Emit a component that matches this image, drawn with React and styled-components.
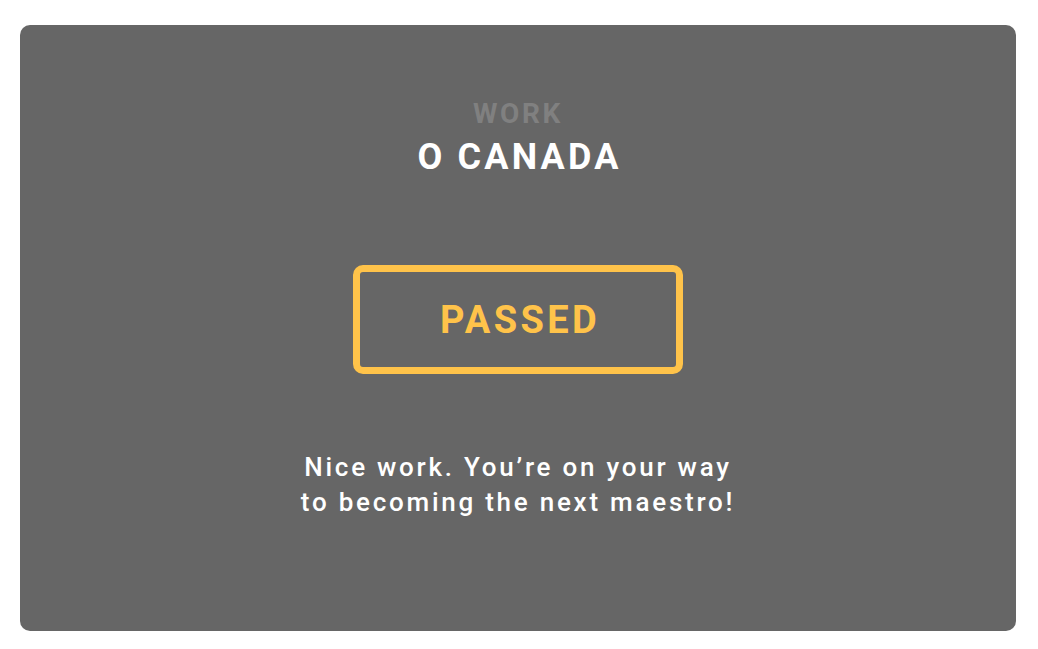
import React from "react";
import styled, { createGlobalStyle } from "styled-components";

const Global = createGlobalStyle`
  html, body { margin: 0; padding: 0; background: #ffffff; }
  body { font-family: Roboto, "Liberation Sans", sans-serif; }
`;

const Page = styled.div`
  padding: 25px 22px 18px 20px;
`;

const Card = styled.div`
  background: #666666;
  border-radius: 10px;
  height: 606px;
  display: flex;
  flex-direction: column;
  align-items: center;
  box-sizing: border-box;
  padding-top: 72px;
`;

const Label = styled.div`
  color: #808080;
  font-weight: 700;
  font-size: 28px;
  letter-spacing: 2.6px;
  line-height: 34px;
`;

const Title = styled.div`
  color: #ffffff;
  font-weight: 700;
  font-size: 36px;
  letter-spacing: 3.2px;
  line-height: 44px;
  margin-top: 4px;
  padding-left: 3px;
`;

const Badge = styled.div`
  margin-top: 86px;
  width: 330px;
  height: 109px;
  box-sizing: border-box;
  border: 7px solid #ffc34a;
  border-radius: 10px;
  display: flex;
  align-items: center;
  justify-content: center;
  padding-left: 4px;
  color: #ffc34a;
  font-weight: 700;
  font-size: 38px;
  letter-spacing: 3.4px;
`;

const Message = styled.p`
  margin: 76px 0 0;
  color: #ffffff;
  font-weight: 500;
  font-size: 26px;
  line-height: 35px;
  letter-spacing: 2.75px;
  text-align: center;
`;

export default function App() {
  return (
    <>
      <Global />
      <Page>
        <Card>
          <Label>WORK</Label>
          <Title>O CANADA</Title>
          <Badge>PASSED</Badge>
          <Message>
            Nice work. You’re on your way
            <br />
            to becoming the next maestro!
          </Message>
        </Card>
      </Page>
    </>
  );
}
